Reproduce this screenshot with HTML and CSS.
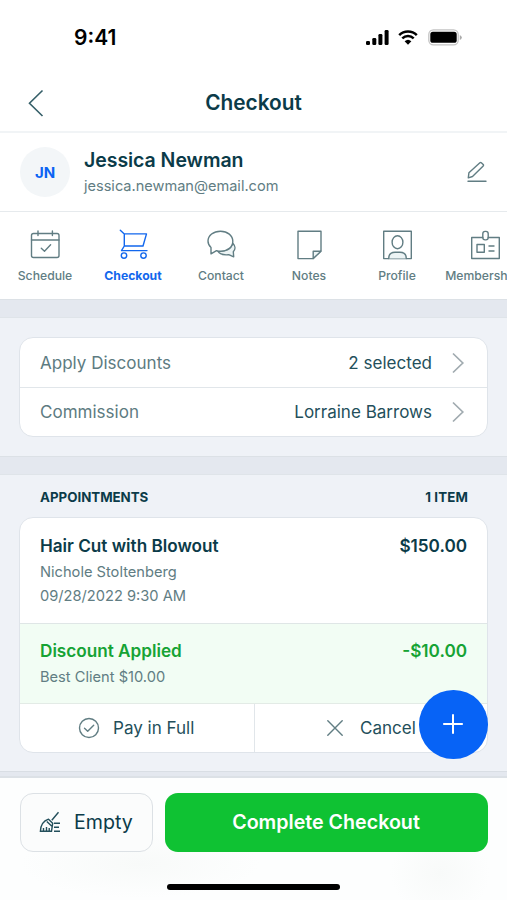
FILE: index.html
```html
<!DOCTYPE html>
<html lang="en">
<head>
<meta charset="utf-8">
<meta name="viewport" content="width=device-width, initial-scale=1">
<title>Checkout</title>
<link rel="stylesheet" href="styles.css">
</head>
<body>
<div class="screen">
  <div class="status">
    <span class="time">9:41</span>
    <div class="status-icons">
      <svg width="23" height="15" viewBox="0 0 23 15"><rect x="0" y="11" width="4" height="4" rx="1.3"/><rect x="6.3" y="8" width="4" height="7" rx="1.3"/><rect x="12.4" y="4" width="4" height="11" rx="1.3"/><rect x="18.6" y="0" width="4" height="15" rx="1.3"/></svg>
      <svg class="wifi" width="20" height="15" viewBox="0 0 20 15"><path d="M1.2 5.2a12.6 12.6 0 0 1 17.6 0M4.3 8.4a8.2 8.2 0 0 1 11.4 0" fill="none" stroke="#000" stroke-width="2.5"/><path d="M6.6 11.3a5 5 0 0 1 6.8 0L10 14.8z"/></svg>
      <svg class="battery" width="34" height="17" viewBox="0 0 34 17"><rect x=".8" y=".8" width="29.4" height="15" rx="4.6" fill="#fff" stroke="#c4c4c4" stroke-width="1.3"/><rect x="2.3" y="2.8" width="26.4" height="11" rx="2.6"/><path d="M31.8 6v5q2-1 2-2.500T31.800 6z" fill="#aaa"/></svg>
    </div>
  </div>
  <header class="nav">
    <svg class="back" width="18" height="28" viewBox="0 0 18 28"><path d="M15.500 1.500L2.500 14.200 15.500 27"/></svg>
    <h1>Checkout</h1>
  </header>
  <section class="client">
    <div class="avatar">JN</div>
    <div class="client-text">
      <div class="client-name">Jessica Newman</div>
      <div class="client-mail">jessica.newman@email.com</div>
    </div>
    <svg class="icon edit" width="20" height="22" viewBox="0 0 20 22"><path d="M1.300 16.800l.6-5L12.900 1.700q.7-.6 1.400 0l1.900 1.900q.7.700 0 1.400L5.500 15.500zM1 20.300h18"/></svg>
  </section>
  <nav class="tabs">
    <a class="tab"><svg class="icon" width="32" height="32" viewBox="0 0 32 32"><rect x="2.500" y="4.500" width="27.500" height="24" rx="2"/><path d="M2.500 11H30M9 2v4.500M23.400 2v4.500M12.300 19.200l3.200 3 6.100-6.400"/></svg><span>Schedule</span></a>
    <a class="tab active"><svg class="icon" width="32" height="32" viewBox="0 0 32 32"><path d="M3.300 1.200l4 3.700H29.500L26 17H7.300V5M7.300 17l-2.800 4.600H30"/><circle cx="7" cy="26.600" r="2.700"/><circle cx="26.500" cy="26.600" r="2.700"/></svg><span>Checkout</span></a>
    <a class="tab"><svg class="icon" width="32" height="32" viewBox="0 0 32 32"><path d="M27.800 14.200c2.700 2.800 2.800 6.200.5 8.500l.4 5.100-5-2.100c-4.800.5-9-.5-10.900-3.500 8 .8 13.700-2.200 15-8z" fill="#edf4f5"/><path d="M15.500 2.200c7.100 0 12.300 4.400 12.300 10s-5 10-12 10c-1.500 0-3-.2-4.300-.6l-5.500 3.200V18.500c-2-1.700-3-4-3-6.400 0-5.600 5.400-9.900 12.500-9.900z" fill="#fff"/></svg><span>Contact</span></a>
    <a class="tab"><svg class="icon" width="32" height="32" viewBox="0 0 32 32"><path d="M5 2.200h23v19.500l-7.800 7.900H5z"/><path d="M20.200 29.600v-7.400H28z" fill="#edf4f5"/></svg><span>Notes</span></a>
    <a class="tab"><svg class="icon" width="32" height="32" viewBox="0 0 32 32"><rect x="2.700" y="2.200" width="27.600" height="27.400"/><ellipse cx="16.500" cy="13.200" rx="5.400" ry="6.500"/><path d="M7.700 29.500c0-4.700 2.300-6.300 6.300-6.300h5c4 0 6.300 1.600 6.300 6.300" fill="#edf4f5"/></svg><span>Profile</span></a>
    <a class="tab"><svg class="icon" width="32" height="32" viewBox="0 0 32 32"><path d="M13.800 8.500H2.700v21h27.600v-21H19.200"/><rect x="13.800" y="2.400" width="5.400" height="8.500" rx="2.300"/><rect x="8" y="15.500" width="7.300" height="7.700"/><path d="M20 17h5M20 22h5"/></svg><span>Memberships</span></a>
  </nav>
  <div class="band"></div>
  <section class="options">
    <div class="card">
      <div class="option"><span>Apply Discounts</span><b>2 selected</b><svg class="chev" width="14" height="22" viewBox="0 0 14 22"><path d="M2 1.500l9.800 9.500L2 20.500"/></svg></div>
      <div class="option"><span>Commission</span><b>Lorraine Barrows</b><svg class="chev" width="14" height="22" viewBox="0 0 14 22"><path d="M2 1.500l9.800 9.500L2 20.500"/></svg></div>
    </div>
  </section>
  <div class="band"></div>
  <section class="appointments">
    <div class="section-head"><span>APPOINTMENTS</span><span class="count">1 ITEM</span></div>
    <div class="card">
      <div class="service">
        <div class="line"><span class="service-name">Hair Cut with Blowout</span><span class="price">$150.00</span></div>
        <div class="sub staff">Nichole Stoltenberg</div>
        <div class="sub date">09/28/2022 9:30 AM</div>
      </div>
      <div class="discount">
        <div class="line"><span class="discount-name">Discount Applied</span><span class="price">-$10.00</span></div>
        <div class="sub best">Best Client $10.00</div>
      </div>
      <div class="actions">
        <div class="action"><svg class="icon" width="22" height="22" viewBox="0 0 22 22"><circle cx="11" cy="11" r="9.500"/><path d="M6.500 11.200l3.200 3 6-6"/></svg><span>Pay in Full</span></div>
        <div class="action cancel"><svg class="icon" width="16" height="16" viewBox="0 0 16 16"><path d="M.8.8l14.400 14.400M15.200.8L.8 15.200"/></svg><span>Cancel</span></div>
      </div>
    </div>
    <button class="add" aria-label="Add"><svg width="22" height="22" viewBox="0 0 22 22"><path d="M11 1.200v19.600M1.200 11h19.600"/></svg></button>
  </section>
  <div class="edge"></div>
  <footer class="bar">
    <div class="buttons">
      <button class="empty"><svg width="22" height="22" viewBox="0 0 22 22"><path d="M19.500 1.200l-6.700 8M9.500 8.200l4.200 4-1.200 8.100H1.400c.2-5.500 2.500-10.200 8.100-12.100zM7.800 10.500l4.800 4.500M4.500 20v-3M7.500 20v-4M10.200 20v-3M15 12.200h6M15 16.200h5M15 20.200h6"/></svg><span>Empty</span></button>
      <button class="complete"><span>Complete Checkout</span></button>
    </div>
    <div class="home"></div>
  </footer>
</div>
</body>
</html>
```

FILE: styles.css
```css
* { box-sizing: border-box; }
body { margin: 0; font-family: Inter, "Liberation Sans", sans-serif; color: #0b3b49; background: #fff; }
button { font: inherit; border: 0; padding: 0; margin: 0; }
svg { display: block; flex: none; }
.screen { width: 507px; height: 900px; overflow: hidden; display: flex; flex-direction: column; }
.screen > * { flex: none; }
.status { height: 74px; padding: 0 45px 0 74px; display: flex; align-items: center; justify-content: space-between; }
.time { font-size: 21px; font-weight: 600; color: #000; }
.status-icons { display: flex; align-items: center; }
.wifi { margin-left: 9px; }
.battery { margin-left: 10px; }
.nav { height: 59px; border-bottom: 2px solid #f1f4f6; display: grid; grid-template-columns: 60px 1fr 60px; align-items: center; }
.back { margin-left: 27px; fill: none; stroke: #355f68; stroke-width: 1.6; }
h1 { margin: 0; font-size: 20.8px; font-weight: 600; text-align: center; }
.client { height: 79px; border-bottom: 1px solid #e6eaed; display: flex; align-items: center; padding: 0 20px; }
.avatar { width: 50px; height: 50px; border-radius: 50%; background: #f3f6f8; color: #0b63f3; font-size: 15px; font-weight: 700; display: flex; align-items: center; justify-content: center; }
.client-text { flex: 1; margin-left: 14px; padding-top: 3px; }
.client-name { font-size: 19.5px; letter-spacing: -.05px; font-weight: 600; line-height: 25px; }
.client-mail { font-size: 14.55px; line-height: 26px; color: #617d83; }
.icon { fill: none; stroke: #617d83; stroke-width: 1.4; stroke-linejoin: round; stroke-linecap: round; }
.tabs { height: 87px; padding-left: 1px; display: flex; overflow: hidden; }
.tab { width: 88px; flex: none; display: flex; flex-direction: column; align-items: center; padding-top: 17px; color: #617d83; font-size: 12.2px; font-weight: 500; line-height: 18px; white-space: nowrap; }
.tab span { margin-top: 6px; }
.tab.active { color: #1267ed; font-weight: 700; }
.tab.active .icon { stroke: #1267ed; }
.band { height: 19px; background: #e4e8ef; border-top: 1px solid #dce1e6; border-bottom: 1px solid #dfe4e9; }
.options { height: 138px; background: #eff2f7; padding: 19px 19px 0; }
.card { background: #fff; border: 1px solid #dfe4ea; border-radius: 14px; overflow: hidden; }
.option { height: 48px; padding: 0 22px 1px 20px; display: flex; align-items: center; font-size: 17.05px; color: #5d7b81; }
.option:first-child { height: 50px; padding-bottom: 0; border-bottom: 1px solid #e1e6ea; }
.option b { margin-left: auto; font-weight: 400; color: #234f5b; }
.chev { margin-left: 19px; fill: none; stroke: #a1abb0; stroke-width: 1.7; }
.appointments { height: 296px; background: #eff2f7; padding: 0 19px; position: relative; }
.section-head { height: 42px; padding: 2px 20px 0 21px; display: flex; justify-content: space-between; align-items: center; font-size: 13.3px; font-weight: 700; }
.count { letter-spacing: .15px; }
.service { height: 106px; padding: 16px 20px 0; border-bottom: 1px solid #dfe6e6; }
.line { display: flex; justify-content: space-between; font-size: 17.15px; line-height: 24px; font-weight: 600; }
.sub { font-size: 14.65px; line-height: 24px; color: #617d83; }
.staff { margin-top: 2px; }
.discount { height: 80px; padding: 15px 20px 0; background: #f2fdf4; border-bottom: 1px solid #e3ebe6; }
.discount .line { color: #16a334; }
.best { margin-top: 2px; }
.actions { height: 48px; display: grid; grid-template-columns: 234px 1fr; font-size: 17.05px; color: #234f5b; }
.action { display: flex; align-items: center; padding-left: 58px; gap: 13px; }
.action span { padding-bottom: 2px; }
.cancel { border-left: 1px solid #e1e6ea; padding-left: 72px; gap: 17px; }
.add { position: absolute; left: 419px; top: 215px; width: 68.500px; height: 68.500px; border-radius: 50%; background: #0763f6; display: flex; align-items: center; justify-content: center; }
.add svg { fill: none; stroke: #fff; stroke-width: 2; }
.edge { height: 7px; background: #e4e8ef; border-top: 1px solid #d9dee4; border-bottom: 2px solid #dce1e6; }
.bar { flex: 1; background: radial-gradient(ellipse 120px 34px at 140px 86px, #f8faf9 0%, #f8faf900 100%), radial-gradient(ellipse 50px 45px at 440px 95px, #f8faf9 0%, #f8faf900 100%), #fdfefe; padding: 15px 19.500px 0 20px; display: flex; flex-direction: column; }
.buttons { display: flex; gap: 12px; }
.empty { width: 132.500px; height: 58.500px; border: 1.5px solid #dce1e5; border-radius: 13px; background: #fbfcfc; color: #0b3b49; font-size: 19.6px; display: flex; align-items: center; padding-left: 18px; gap: 13px; }
.empty svg { fill: none; stroke: #234f5b; stroke-width: 1.4; }
.complete { flex: 1; height: 58.500px; border-radius: 13px; background: #0fc233; color: #fff; font-size: 19.65px; font-weight: 600; }
.home { width: 173px; height: 6.500px; border-radius: 4px; background: #000; margin: 32px 0 0 147px; }
```
